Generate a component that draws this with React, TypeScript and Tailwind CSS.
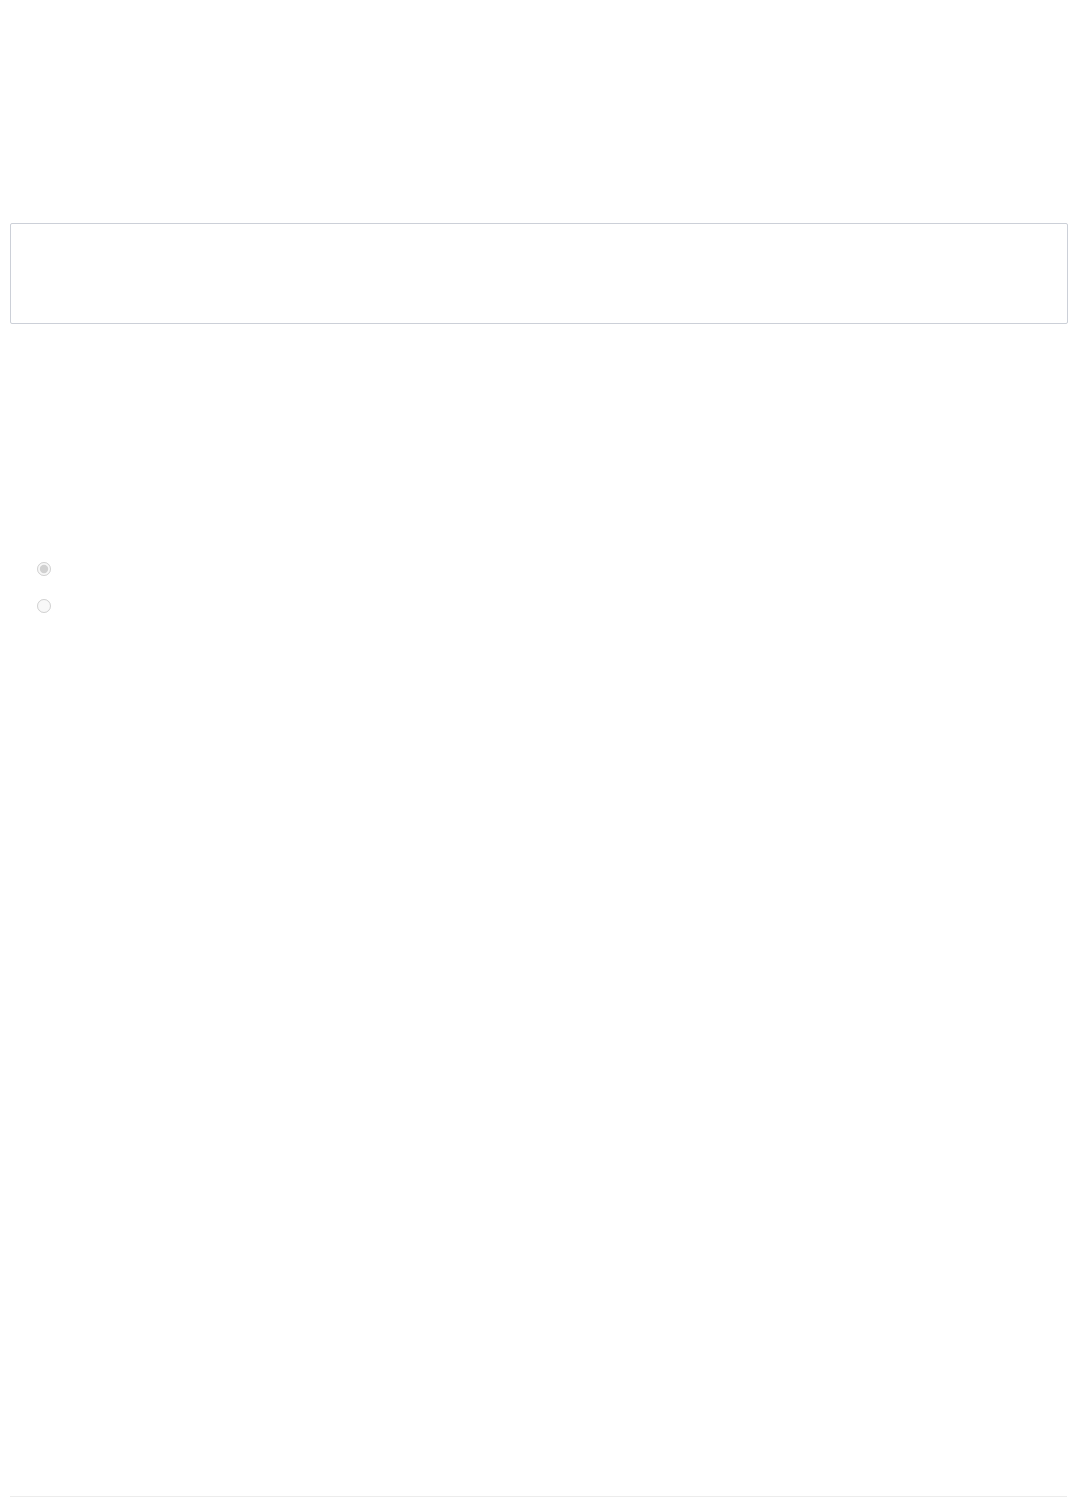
export default function App() {
  return (
    <div className="min-h-[1497px] bg-white pl-[10px] pr-[9px] flex flex-col font-['Liberation_Sans',sans-serif]">
      <div className="mt-[223px] h-[101px] rounded-[2px] border border-[#ccd0d8] bg-white" />

      <div className="mt-[238px] pl-[27px] flex flex-col gap-[23px]">
        <label className="flex items-center h-[14px]">
          <input type="radio" name="opt" defaultChecked disabled className="m-0 w-[14px] h-[14px]" />
        </label>
        <label className="flex items-center h-[14px]">
          <input type="radio" name="opt" disabled className="m-0 w-[14px] h-[14px]" />
        </label>
      </div>

      <div className="mt-auto mr-px h-px bg-[#ececec]" />
    </div>
  );
}
